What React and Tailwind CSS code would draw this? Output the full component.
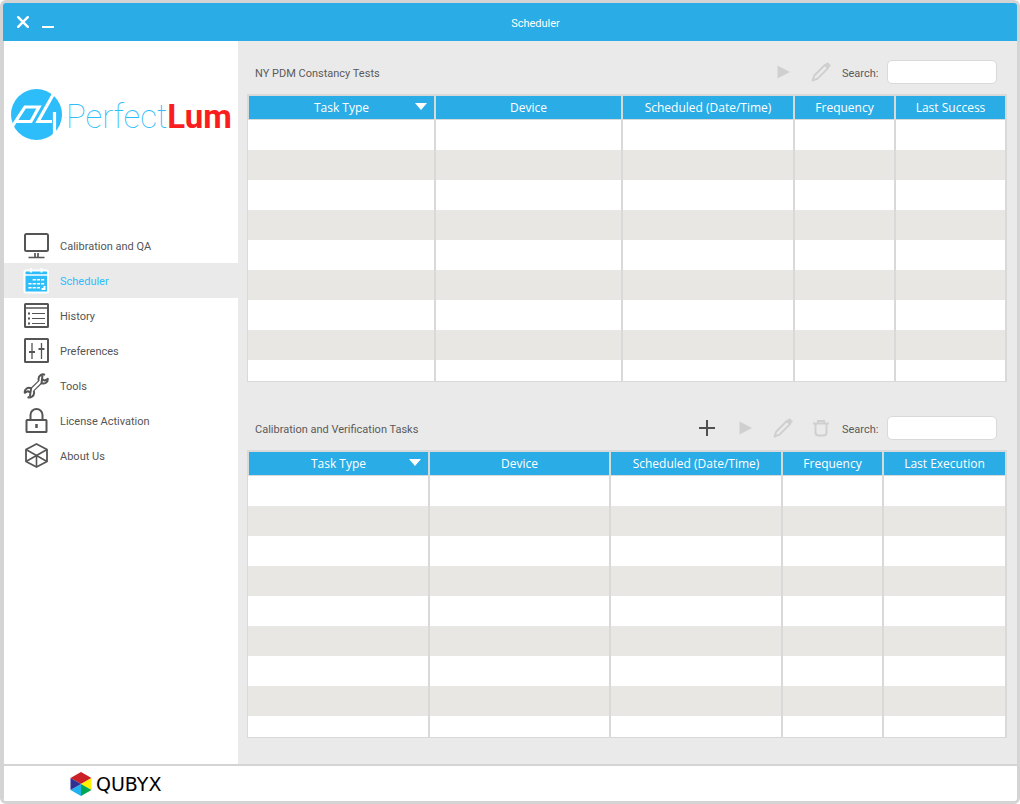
import React, { useState } from 'react';
import clsx from 'clsx';

const MonitorIcon = () => (
  <svg viewBox="0 0 26 26" className="h-[26px] w-[26px]" fill="none" stroke="currentColor" strokeWidth="2">
    <rect x="2" y="1" width="23" height="17" rx="1.5" />
    <path d="M5.500 24.500h16M12 20v4M15 20v4" strokeWidth="1.7" />
  </svg>
);

const CalendarIcon = () => (
  <svg viewBox="0 0 26 26" className="h-[26px] w-[26px]" fill="none">
    <rect x="1.500" y="2.500" width="23.500" height="22" rx="1.500" fill="#2dbdfb" stroke="#fff" strokeWidth="2" />
    <path d="M2 7h22" stroke="#fff" strokeWidth="1.500" />
    <path d="M8 0v4.500M18.500 0v4.500" stroke="#fff" strokeWidth="2" />
    <path d="M9.600 11.800h12M5.400 15.800h16.200M5.400 19.800h12" stroke="#fff" strokeWidth="1.600" strokeDasharray="3.200 1" />
    <path d="M22.500 18v4h-4v-2h2v-2z" fill="#fff" />
  </svg>
);

const HistoryIcon = () => (
  <svg viewBox="0 0 26 26" className="h-[26px] w-[26px]" fill="none" stroke="currentColor" strokeWidth="2">
    <rect x="2" y="1" width="23" height="23" rx="0.500" />
    <path d="M2 5h23" strokeWidth="1.500" />
    <path d="M9 10.500h13M9 15.500h13M9 20.500h13" strokeWidth="1" />
    <path d="M5 10.500h2M5 15.500h2M5 20.500h2" strokeWidth="2" />
  </svg>
);

const SlidersIcon = () => (
  <svg viewBox="0 0 26 26" className="h-[26px] w-[26px]" fill="none" stroke="currentColor" strokeWidth="2">
    <rect x="2" y="1" width="23" height="23" rx="0.500" />
    <path d="M9 5v16M18.500 5v16" strokeWidth="1.300" />
    <path d="M6 14h6M15.500 11h6" strokeWidth="2" />
  </svg>
);

const WrenchIcon = () => (
  <svg viewBox="0 0 26 26" className="h-[26px] w-[26px]" fill="none" stroke="currentColor" strokeWidth="2" strokeLinejoin="round">
    <path d="M22 1.800c-3-1.300-6.500.7-6.500 4.200 0 .7.100 1.300.4 1.900M18.500 10.300c3.300 1 6.500-1 6.300-4.500l-3.200 1.800-2.600-1.500.4-2.700z" />
    <path d="M4.600 24c3 1.300 6.500-.7 6.500-4.200 0-.7-.1-1.300-.4-1.900M8.100 15.300c-3.500-1.400-7 1-6.300 4.500l3-1.600 2.600 1.500-.4 2.700z" />
    <path d="M15.700 7.900L8.100 15.300M18.500 10.300l-7.800 7.600" strokeWidth="1.200" />
  </svg>
);

const LockIcon = () => (
  <svg viewBox="0 0 26 26" className="h-[26px] w-[26px]" fill="none" stroke="currentColor" strokeWidth="2">
    <rect x="3.500" y="12" width="20" height="12" rx="0.500" />
    <path d="M7.500 12V7a6 6 0 0 1 12 0v5" />
    <path d="M13.500 16v4" strokeWidth="2.500" />
  </svg>
);

const CubeIcon = () => (
  <svg viewBox="0 0 26 26" className="h-[26px] w-[26px]" fill="none" stroke="currentColor" strokeWidth="1.800" strokeLinejoin="round">
    <path d="M13.500 1L24 6.500v12L13.500 24 3 18.500v-12z" />
    <path d="M3 6.500l10.500 6 10.500-6M3 18.500l10.500-6 10.500 6M13.500 12.500V24" strokeWidth="1.600" />
  </svg>
);

const PlusIcon = () => (
  <svg viewBox="0 0 18 18" className="h-[18px] w-[18px]" stroke="currentColor" strokeWidth="2">
    <path d="M9 1v16M1 9h16" />
  </svg>
);

const PlayIcon = () => (
  <svg viewBox="0 0 14 14" className="h-[14px] w-[14px]" fill="currentColor">
    <path d="M1.500 0.500v13L14 7z" />
  </svg>
);

const PencilIcon = () => (
  <svg viewBox="0 0 20 20" className="h-5 w-5" fill="none" stroke="currentColor" strokeWidth="1.900" strokeLinejoin="round">
    <path d="M1.500 18.500l1.800-5L13.800 3l3.200 3.200L6.500 16.700z" />
    <path d="M14.200 2.600l1.200-1.200a1.500 1.500 0 0 1 2.200 0l1 1a1.500 1.500 0 0 1 0 2.200l-1.200 1.200z" fill="currentColor" strokeWidth="1" />
  </svg>
);

const TrashIcon = () => (
  <svg viewBox="0 0 18 18" className="h-[18px] w-[18px]" fill="none" stroke="currentColor" strokeWidth="2">
    <path d="M1 4.500h16M6 4V2h6v2" strokeWidth="2" />
    <path d="M3.500 5v8.500a3 3 0 0 0 3 3h5a3 3 0 0 0 3-3V5" />
  </svg>
);

const navItems = [
  { label: 'Calibration and QA', icon: MonitorIcon },
  { label: 'Scheduler', icon: CalendarIcon },
  { label: 'History', icon: HistoryIcon },
  { label: 'Preferences', icon: SlidersIcon },
  { label: 'Tools', icon: WrenchIcon },
  { label: 'License Activation', icon: LockIcon },
  { label: 'About Us', icon: CubeIcon },
];

const constancyColumns = [
  { label: 'Task Type', width: 'w-[188px]', sorted: true },
  { label: 'Device', width: 'w-[187px]' },
  { label: 'Scheduled (Date/Time)', width: 'w-[172px]' },
  { label: 'Frequency', width: 'w-[101px]' },
  { label: 'Last Success', width: 'w-[111px]' },
];

const calibrationColumns = [
  { label: 'Task Type', width: 'w-[182px]', sorted: true },
  { label: 'Device', width: 'w-[181px]' },
  { label: 'Scheduled (Date/Time)', width: 'w-[172px]' },
  { label: 'Frequency', width: 'w-[101px]' },
  { label: 'Last Execution', width: 'w-[123px]' },
];

const ROW_COUNT = 9;

const ToolButton = ({ label, disabled = false, children }) => (
  <button
    type="button"
    aria-label={label}
    disabled={disabled}
    className="flex h-6 w-[38px] items-center justify-center text-[#505050] disabled:text-[#cfcfcf]"
  >
    {children}
  </button>
);

const TaskTable = ({ columns, title }) => (
  <div className="border-t-2 border-b border-l border-[#d9d9d9]">
    <table aria-label={title} className="w-full table-fixed border-separate border-spacing-0">
      <thead>
        <tr>
          {columns.map((col) => (
            <th
              key={col.label}
              scope="col"
              className={clsx(
                'h-6 border-r-2 border-b border-[#d9d9d9] bg-[#2aace6] p-0 font-["Open_Sans",sans-serif] text-[12px] leading-4 font-normal text-white first:border-l',
                col.width
              )}
            >
              <div className="relative">
                {col.label}
                {col.sorted && (
                  <svg viewBox="0 0 12 7" className="absolute top-[3px] right-[7px] h-[7px] w-3" fill="#fff">
                    <path d="M0 0h12L6 7z" />
                  </svg>
                )}
              </div>
            </th>
          ))}
        </tr>
      </thead>
      <tbody>
        {Array.from({ length: ROW_COUNT }, (_, row) => (
          <tr key={row} className={row % 2 ? 'bg-[#e8e7e3]' : 'bg-white'}>
            {columns.map((col) => (
              <td
                key={col.label}
                className={clsx('border-r-2 border-[#d9d9d9] p-0', row === ROW_COUNT - 1 ? 'h-[21px]' : 'h-[30px]')}
              />
            ))}
          </tr>
        ))}
      </tbody>
    </table>
  </div>
);

const TaskSection = ({ id, title, columns, children }) => {
  const [query, setQuery] = useState('');

  return (
    <section>
      <div className="mb-2.5 flex h-6 items-center pr-2.5 pl-2">
        <h2 className="flex-1 pt-1">{title}</h2>
        {children}
        <label htmlFor={id} className="ml-0.5 w-[45px] pt-1">
          Search:
        </label>
        <input
          id={id}
          type="text"
          value={query}
          onChange={(e) => setQuery(e.target.value)}
          className="h-6 w-[110px] rounded-[5px] border border-[#d9d9d9] bg-white px-2 outline-none"
        />
      </div>
      <TaskTable columns={columns} title={title} />
    </section>
  );
};

const Logo = () => (
  <div className="flex h-[51px] items-center pl-[7px]">
    <svg viewBox="0 0 51 51" className="h-[51px] w-[51px] shrink-0">
      <circle cx="25.500" cy="25.500" r="25.500" fill="#2dbdfb" />
      <g fill="none" stroke="#fff" strokeWidth="3.200">
        <path d="M1 38L14 18h14L20 32.500H5" />
        <path d="M42.500 5L27 32.500H41" />
        <path d="M43.500 23v22" />
      </g>
    </svg>
    <div className="ml-1 flex items-baseline pt-1 font-[Roboto,sans-serif] text-[33px] leading-[51px]">
      <span className="font-thin text-[#2dbdfb]">Perfect</span>
      <span className="font-bold text-[#fb1d1d]">Lum</span>
    </div>
  </div>
);

const Sidebar = () => {
  const [active, setActive] = useState('Scheduler');

  return (
    <aside className="w-[235px] shrink-0 border-l border-[#d4d4d4] bg-white pt-12">
      <Logo />
      <nav className="mt-[88px]">
        {navItems.map(({ label, icon: Icon }) => (
          <button
            key={label}
            type="button"
            onClick={() => setActive(label)}
            className={clsx(
              'flex h-[35px] w-full items-center gap-[11px] pl-[19px] text-left',
              active === label ? 'bg-[#eaeaea] text-[#2dbdfb]' : 'text-[#555555]'
            )}
          >
            <Icon />
            <span className="pt-0.5">{label}</span>
          </button>
        ))}
      </nav>
    </aside>
  );
};

const TitleBar = () => (
  <header className="flex h-[38px] items-center bg-[#2aace6] pl-3.5 text-white">
    <button type="button" aria-label="Close" className="flex h-5 w-3 items-center justify-center">
      <svg viewBox="0 0 12 12" className="h-3 w-3" stroke="currentColor" strokeWidth="2.400" strokeLinecap="round">
        <path d="M1.200 1.200l9.600 9.600M10.800 1.200l-9.600 9.600" />
      </svg>
    </button>
    <button type="button" aria-label="Minimize" className="ml-[13px] flex h-5 w-3 items-end justify-center pb-1">
      <span className="h-0.5 w-3 bg-white" />
    </button>
    <h1 className="flex-1 pt-1 text-center">Scheduler</h1>
  </header>
);

const Footer = () => (
  <footer className="flex h-[37px] items-center border-t-2 border-l border-t-[#d4d4d4] border-l-[#d4d4d4] bg-white pl-[66px]">
    <svg viewBox="0 0 22 24" className="h-6 w-[22px]">
      <path d="M11 12L0.500 6 11 0l10.500 6z" fill="#cb2027" />
      <path d="M11 12l10.500-6v12z" fill="#fff200" />
      <path d="M11 12l10.500 6L11 24z" fill="#00a651" />
      <path d="M11 12v12L0.500 18z" fill="#1fb1f0" />
      <path d="M11 12L0.500 18V6z" fill="#2e3192" />
    </svg>
    <span className='ml-1 font-["DejaVu_Sans",sans-serif] text-[19px] leading-6 text-black'>QUBYX</span>
  </footer>
);

export default function App() {
  return (
    <div className="flex min-h-screen flex-col overflow-hidden rounded-md border-[3px] border-[#d4d4d4] bg-[#eaeaea] font-[Roboto,sans-serif] text-[11px] leading-4 text-[#5a5a5a]">
      <TitleBar />
      <div className="flex flex-1">
        <Sidebar />
        <main className="flex min-w-0 flex-1 flex-col gap-[34px] pt-[19px] pr-2.5 pb-6 pl-[9px]">
          <TaskSection id="constancy-search" title="NY PDM Constancy Tests" columns={constancyColumns}>
            <ToolButton label="Run" disabled>
              <PlayIcon />
            </ToolButton>
            <ToolButton label="Edit" disabled>
              <PencilIcon />
            </ToolButton>
          </TaskSection>
          <TaskSection id="calibration-search" title="Calibration and Verification Tasks" columns={calibrationColumns}>
            <ToolButton label="Add">
              <PlusIcon />
            </ToolButton>
            <ToolButton label="Run" disabled>
              <PlayIcon />
            </ToolButton>
            <ToolButton label="Edit" disabled>
              <PencilIcon />
            </ToolButton>
            <ToolButton label="Delete" disabled>
              <TrashIcon />
            </ToolButton>
          </TaskSection>
        </main>
      </div>
      <Footer />
    </div>
  );
}
